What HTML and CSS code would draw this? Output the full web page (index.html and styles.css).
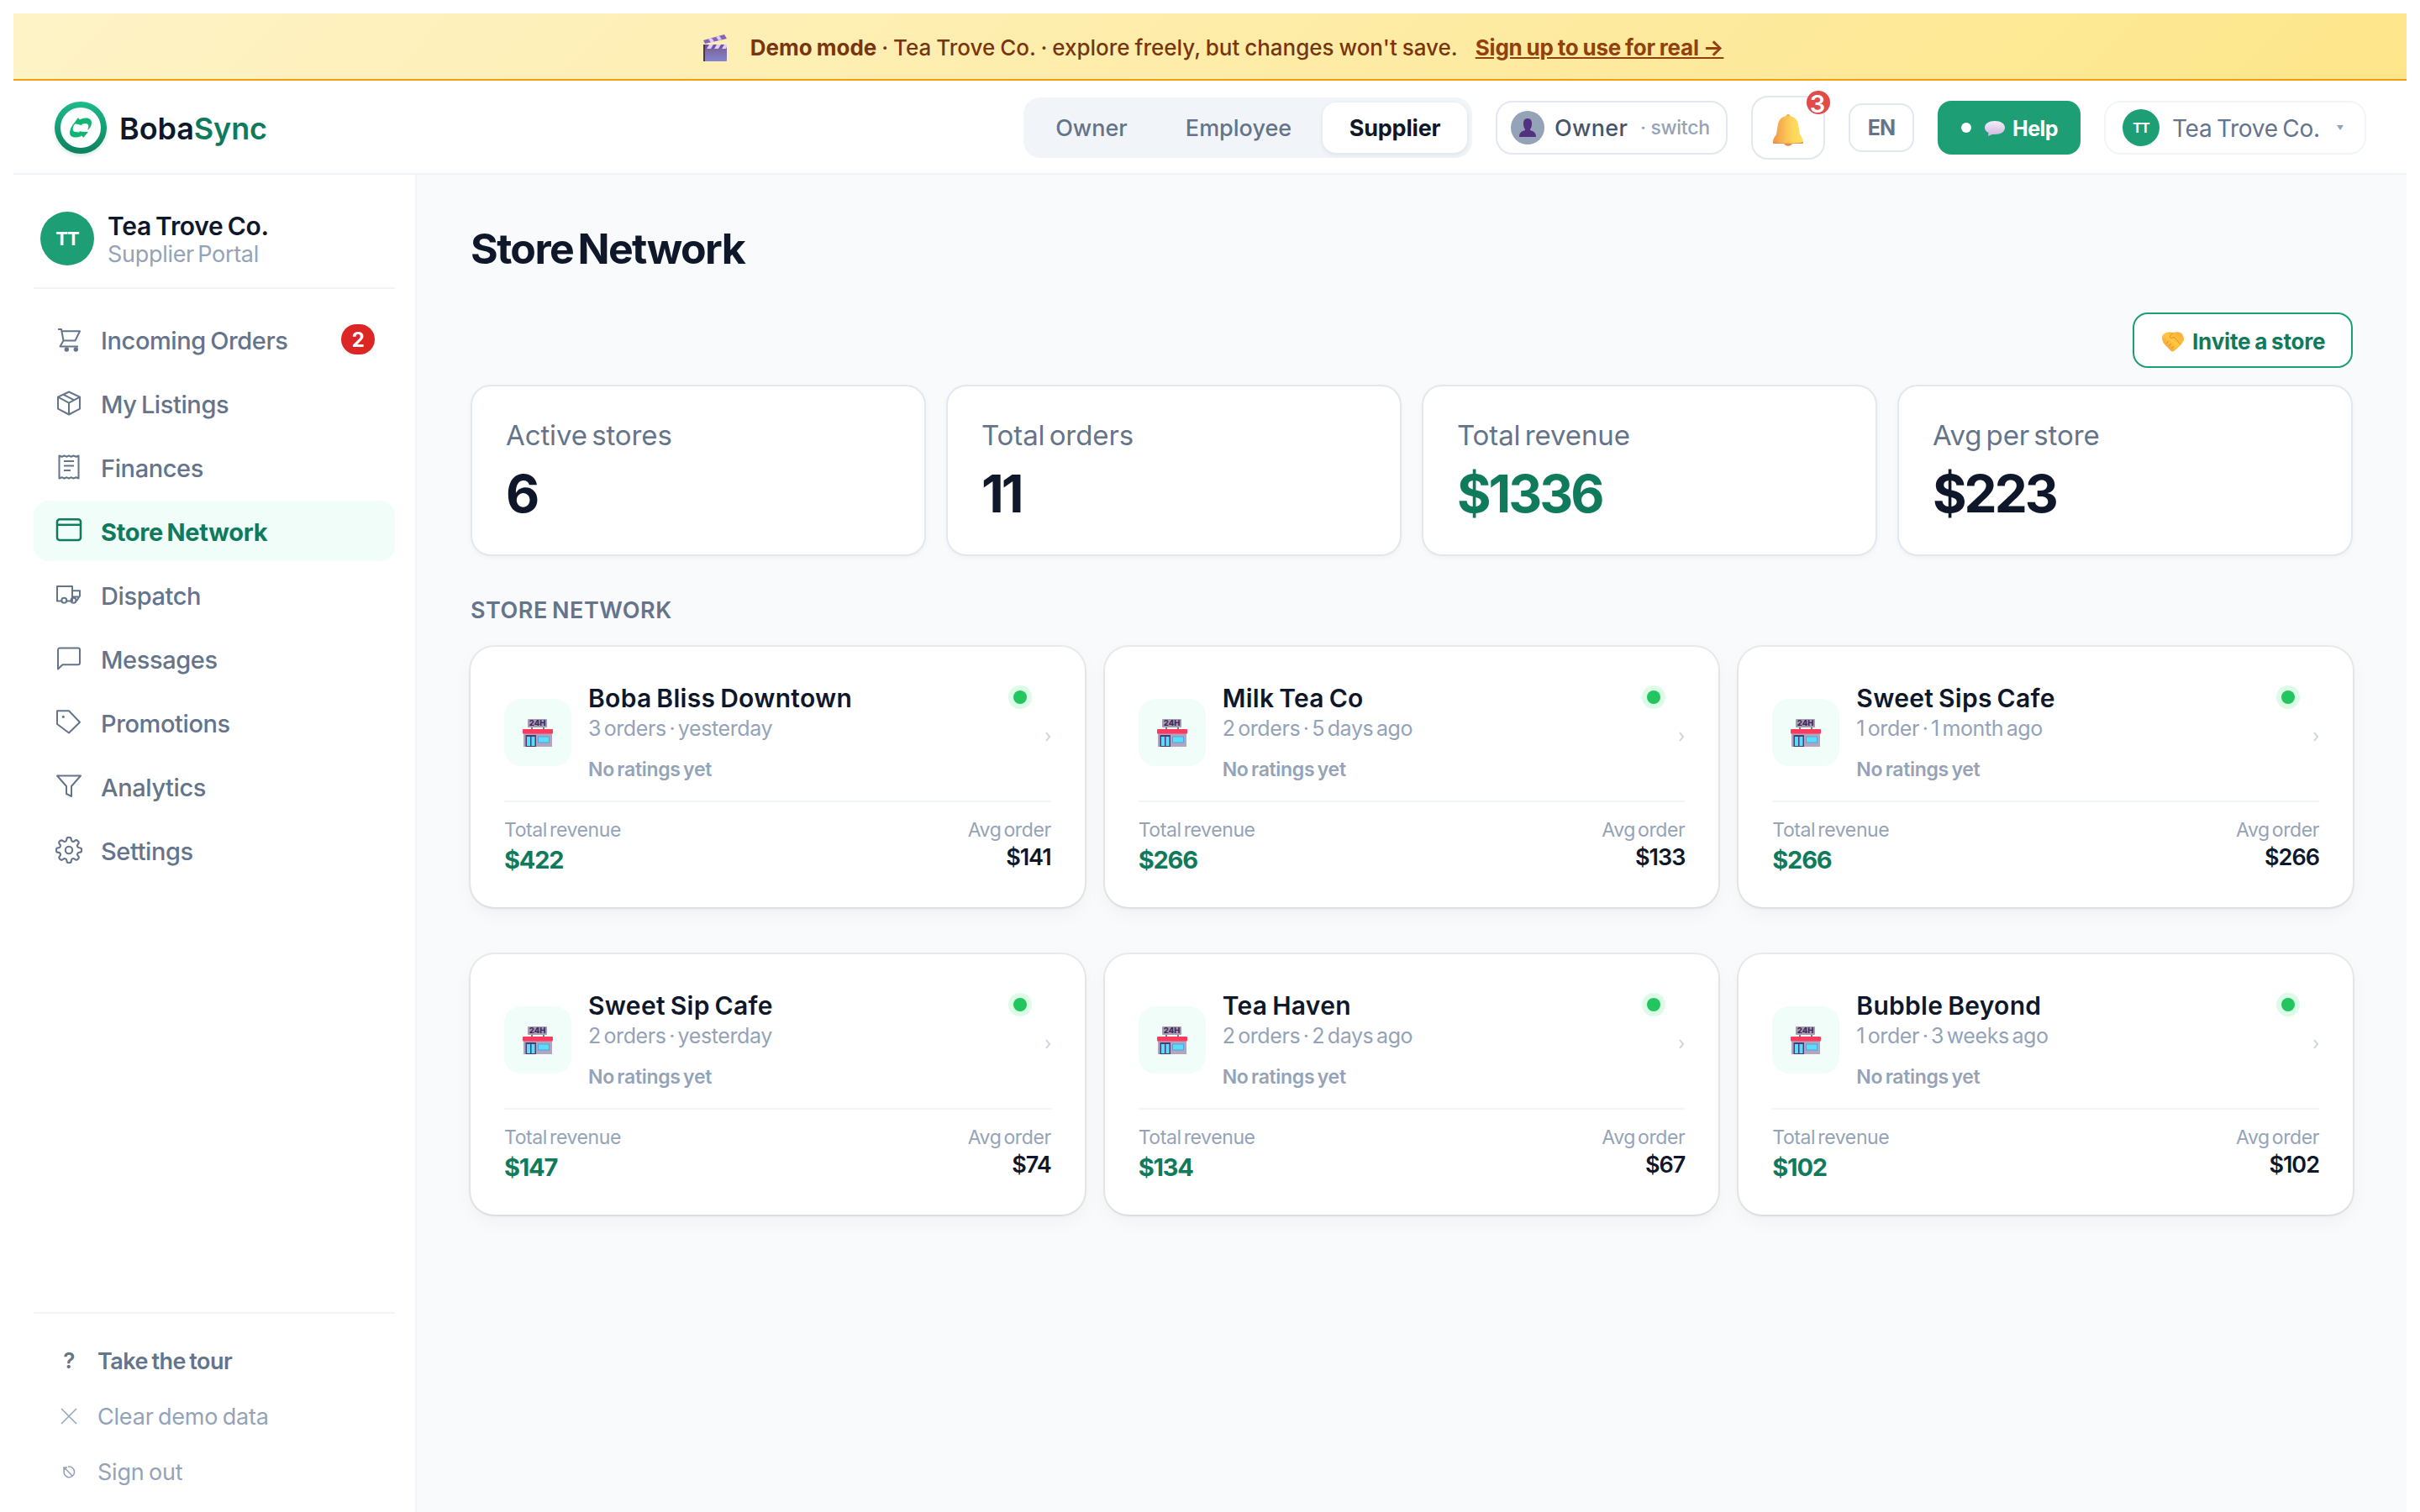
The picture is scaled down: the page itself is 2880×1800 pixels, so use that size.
FILE: index.html
```html
<!DOCTYPE html>
<html lang="en">
<head>
  <meta charset="UTF-8"/>
  <meta name="viewport" content="width=device-width, initial-scale=1.0"/>
  <title>BobaSync - Store Network</title>
  <link rel="stylesheet" href="styles.css">
</head>
<body>
<div class="demo-banner">
  <svg class="clapper" viewBox="0 0 28 32">
    <defs>
      <linearGradient id="clap" x1="0" y1="0" x2="0" y2="1"><stop offset="0" stop-color="#7d5a8c"/><stop offset="1" stop-color="#8285d0"/></linearGradient>
    </defs>
    <path d="M0 7 25 0 28 5 2 11Z" fill="#8a63b8"/>
    <path d="M6 5.300l4-1.100 3 4.300-4 1zM15 2.800l4-1.100 3 4.200-4 1z" fill="#d8d0ff"/>
    <rect y="12" width="28" height="20" rx="1" fill="url(#clap)"/>
    <rect y="12" width="28" height="5" fill="#7a4fa8"/>
    <path d="M7 12h5l-3 5H4zM16 12h5l-3 5h-5zM25 12h3v3l-1 2h-5z" fill="#d8d0ff"/>
    <rect y="12" width="2" height="20" fill="#4a3560"/>
  </svg>
  <span class="demo-text"><b>Demo mode</b> · Tea Trove Co. · explore freely, but changes won't save.</span>
  <a class="demo-link">Sign up to use for real →</a>
</div>

<header class="topbar">
  <div class="brand">
    <svg class="brand-logo" viewBox="0 0 64 64">
      <defs>
        <linearGradient id="ring" x1="0" y1="0" x2="0" y2="1"><stop offset="0" stop-color="#1dbb8b"/><stop offset="1" stop-color="#0f7f5f"/></linearGradient>
      </defs>
      <circle cx="32" cy="32" r="31" fill="url(#ring)"/>
      <circle cx="32" cy="32" r="24" fill="#fff"/>
      <path d="M24 27l5-7 1.500 2.500C37 19 45 20 45 26c0 4-2 7-5 9 2-4 2-8-2-8-2 0-4 .5-5 1.500l1 1c-3-1-7-2-10-2.500z" fill="#0eb573"/>
      <path d="M26 26c-4 3-6 8-5 11 1 3 5 3 8 2.500" fill="none" stroke="#0eb573" stroke-width="1.500"/>
      <path d="M41 37l-6 7-1.500-2.500C27 45 19 44 19 38c0-4 2-7 5-9-2 4-2 8 2 8 2 0 4 1 5 0l-1-1c3 1 8 1 11 1z" fill="#0eb573"/>
    </svg>
    <span class="brand-name">Boba<span>Sync</span></span>
  </div>

  <nav class="role-toggle">
    <a class="role owner">Owner</a>
    <a class="role employee">Employee</a>
    <a class="role supplier active">Supplier</a>
  </nav>

  <button class="switch-btn">
    <span class="user-dot">
      <svg viewBox="0 0 20 24"><path d="M10 1c4 0 5 3 5 6 0 4-1 5-2 7v1c4 1 7 3 7 8H0c0-5 3-7 7-8v-1c-1-2-2-3-2-7 0-3 1-6 5-6z" fill="#533182"/></svg>
    </span>
    <span class="switch-name">Owner</span>
    <span class="switch-hint">· switch</span>
  </button>

  <button class="bell-btn">
    <svg viewBox="0 0 36 38">
      <defs>
        <linearGradient id="bell" x1="0" y1="0" x2="1" y2="0"><stop offset="0" stop-color="#ef9549"/><stop offset=".6" stop-color="#ffd35a"/><stop offset="1" stop-color="#ffe25c"/></linearGradient>
      </defs>
      <path d="M13 34h10c0 5-10 5-10 0z" fill="#f08a55"/>
      <circle cx="18" cy="2.500" r="2.500" fill="#f5b04c"/>
      <path d="M18 2c7 0 11 4 12 10l2 12c3 4 4 6 4 9 0 2-1 2-2 2H2c-2 0-2-1-2-2 0-3 1-5 4-9l2-12C7 6 11 2 18 2z" fill="url(#bell)"/>
      <path d="M0 33c6 2 30 2 36 0 0 2-1 2-2 2H2c-2 0-2-1-2-2z" fill="#e8894f"/>
    </svg>
    <span class="bell-count">3</span>
  </button>

  <button class="lang-btn">EN</button>

  <button class="help-btn">
    <i class="help-dot"></i>
    <svg viewBox="0 0 24 18">
      <defs>
        <linearGradient id="talk" x1="0" y1="0" x2="0" y2="1"><stop offset="0" stop-color="#f4eef8"/><stop offset="1" stop-color="#cdb6e2"/></linearGradient>
      </defs>
      <path d="M12 0c7 0 12 3 12 8s-5 8-12 8H9l-5 2 .5-4C2 13 0 11 0 8c0-5 5-8 12-8z" fill="url(#talk)"/>
    </svg>
    <span>Help</span>
  </button>

  <button class="account-btn">
    <span class="avatar small">TT</span>
    <span class="account-name">Tea Trove Co.</span>
    <i class="caret"></i>
  </button>
</header>

<div class="layout">
  <aside class="sidebar">
    <div class="profile">
      <span class="avatar">TT</span>
      <div class="profile-text">
        <div class="profile-name">Tea Trove Co.</div>
        <div class="profile-role">Supplier Portal</div>
      </div>
    </div>

    <nav class="menu">
      <a class="menu-item">
        <svg viewBox="0 0 32 32"><path d="M3 4h4l2.500 13.500L5.500 24.500h21.500M7.500 6.300H29l-5.500 11.200h-14"/><circle class="fill" cx="13.300" cy="28" r="1.700"/><circle class="fill" cx="24.300" cy="28" r="1.700"/></svg>
        <span>Incoming Orders</span>
        <b class="menu-count">2</b>
      </a>
      <a class="menu-item">
        <svg viewBox="0 0 32 32"><path d="M16 2.500 29 8.700v14L16 29.500 3 22.700v-14zM3 8.700l13 6.900 13-6.900M16 15.600v13.900M9.300 5.700l13 6.700"/></svg>
        <span>My Listings</span>
      </a>
      <a class="menu-item">
        <svg viewBox="0 0 32 32"><path d="M4.500 2.500l3 1.200 3-1.200 3 1.200 2.500-1.200 2.500 1.200 3-1.200 3 1.200 3-1.200v27l-3-1.200-3 1.200-3-1.200-2.500 1.200-2.500-1.200-3 1.200-3-1.200-3 1.200zM10 9h12M10 14.400h12M10 20h8"/></svg>
        <span>Finances</span>
      </a>
      <a class="menu-item active">
        <svg viewBox="0 0 32 32"><rect x="2" y="2.300" width="28" height="24.700" rx="3"/><path d="M2 8.800h28"/></svg>
        <span>Store Network</span>
      </a>
      <a class="menu-item">
        <svg viewBox="0 0 32 32"><path d="M7 23.500H2V6h18v17.500h-6M20 11.200h9v6.300l-4 6M20 23.500h-2M20 18.500h8"/><circle cx="10.300" cy="22.800" r="3"/><circle cx="21.500" cy="22.800" r="3"/></svg>
        <span>Dispatch</span>
      </a>
      <a class="menu-item">
        <svg viewBox="0 0 32 32"><path d="M3 28.500V5.500a2 2 0 0 1 2-2h22a2 2 0 0 1 2 2v15.800a2 2 0 0 1-2 2H8.500z"/></svg>
        <span>Messages</span>
      </a>
      <a class="menu-item">
        <svg viewBox="0 0 32 32"><path d="M2 2.300h14l13 13.400-13 12.800L2 18z"/><circle class="fill" cx="9.300" cy="9.300" r=".6"/></svg>
        <span>Promotions</span>
      </a>
      <a class="menu-item">
        <svg viewBox="0 0 32 32"><path d="M2 3.500h28L19 16v12l-6-3v-9z"/></svg>
        <span>Analytics</span>
      </a>
      <a class="menu-item">
        <svg class="gear" viewBox="0.500 0.500 23 23"><circle cx="12" cy="12" r="3"/><path d="M19.400 15a1.650 1.650 0 0 0 .33 1.820l.06.06a2 2 0 0 1-2.830 2.830l-.06-.06a1.650 1.650 0 0 0-1.820-.33 1.650 1.650 0 0 0-1 1.510V21a2 2 0 0 1-4 0v-.09A1.650 1.650 0 0 0 9 19.400a1.650 1.650 0 0 0-1.820.33l-.06.06a2 2 0 0 1-2.830-2.830l.06-.06a1.650 1.650 0 0 0 .33-1.820 1.650 1.650 0 0 0-1.510-1H3a2 2 0 0 1 0-4h.09A1.650 1.650 0 0 0 4.600 9a1.650 1.650 0 0 0-.33-1.820l-.06-.06a2 2 0 0 1 2.830-2.830l.06.06a1.650 1.650 0 0 0 1.820.33H9a1.650 1.650 0 0 0 1-1.510V3a2 2 0 0 1 4 0v.09a1.650 1.650 0 0 0 1 1.510 1.650 1.650 0 0 0 1.820-.33l.06-.06a2 2 0 0 1 2.830 2.830l-.06.06a1.650 1.650 0 0 0-.33 1.820V9a1.650 1.650 0 0 0 1.510 1H21a2 2 0 0 1 0 4h-.09a1.650 1.650 0 0 0-1.510 1z"/></svg>
        <span>Settings</span>
      </a>
    </nav>

    <div class="side-footer">
      <a class="side-link strong"><span class="side-icon">?</span>Take the tour</a>
      <a class="side-link"><svg class="side-icon" viewBox="0 0 32 20"><path d="M7 1l18 18M25 1 7 19"/></svg>Clear demo data</a>
      <a class="side-link"><svg class="side-icon" viewBox="0 0 32 20"><path d="M11.300 6.500A6.300 6.300 0 1 0 15 4.200M20 15 11 5.500M10 9V5h4"/></svg>Sign out</a>
    </div>
  </aside>

  <main class="content">
    <h1>Store Network</h1>

    <div class="actions">
      <button class="invite-btn">
        <svg viewBox="0 0 26 24">
          <defs>
            <linearGradient id="hand" x1="0" y1="1" x2="1" y2="0"><stop offset="0" stop-color="#ef8d3f"/><stop offset=".5" stop-color="#ffc83d"/><stop offset="1" stop-color="#f9a83a"/></linearGradient>
          </defs>
          <path d="M5 1c3-1 5-1 8 0 3-1 6-1 9 0 3 2 4 5 4 9l-3 5-4 4-5 4c-2 1-4 0-5-2l-5-5c-3-3-4-6-4-9 0-3 2-5 5-6z" fill="url(#hand)"/>
          <path d="M13 1 9 6c1 2 3 2 5 0l8 9M5 14l3-3M8 17l3-3M11 20l3-3" fill="none" stroke="#e8862f"/>
        </svg>
        <span>Invite a store</span>
      </button>
    </div>

    <section class="stats">
      <div class="stat">
        <div class="stat-label">Active stores</div>
        <div class="stat-value">6</div>
      </div>
      <div class="stat">
        <div class="stat-label">Total orders</div>
        <div class="stat-value">11</div>
      </div>
      <div class="stat">
        <div class="stat-label">Total revenue</div>
        <div class="stat-value green">$1336</div>
      </div>
      <div class="stat">
        <div class="stat-label">Avg per store</div>
        <div class="stat-value">$223</div>
      </div>
    </section>

    <h2>STORE NETWORK</h2>
    <section class="store-grid" id="grid"></section>
  </main>
</div>

<script>
  const stores = [
    { name: "Boba Bliss Downtown", info: "3 orders · yesterday", revenue: "$422", avg: "$141" },
    { name: "Milk Tea Co", info: "2 orders · 5 days ago", revenue: "$266", avg: "$133" },
    { name: "Sweet Sips Cafe", info: "1 order · 1 month ago", revenue: "$266", avg: "$266" },
    { name: "Sweet Sip Cafe", info: "2 orders · yesterday", revenue: "$147", avg: "$74" },
    { name: "Tea Haven", info: "2 orders · 2 days ago", revenue: "$134", avg: "$67" },
    { name: "Bubble Beyond", info: "1 order · 3 weeks ago", revenue: "$102", avg: "$102" }
  ];

  const shopIcon = `
    <svg viewBox="0 0 36 33">
      <path d="M11 8v5M25 8v5" stroke="#5b4a6b" stroke-width="1.500"/>
      <rect x="1" y="16" width="34" height="17" fill="#b3a5bd"/>
      <rect x="6" y="0" width="23" height="10" rx="1" fill="#a79bb0"/>
      <text x="17.500" y="8.300" text-anchor="middle">24H</text>
      <rect x="0" y="12" width="36" height="5.500" rx="1" fill="#fb3a5e"/>
      <rect x="3.500" y="19" width="12.500" height="14" fill="#4b3a78"/>
      <path d="M5 21h4v11H5zM10.500 21h4v11h-4z" fill="#5bdcf8"/>
      <rect x="18.500" y="21" width="13" height="7" fill="#5bdcf8" stroke="#4aa5e8"/>
    </svg>`;

  const grid = document.getElementById("grid");

  stores.forEach((store) => {
    const card = document.createElement("div");
    card.className = "store";
    card.innerHTML = `
      <div class="store-top">
        <div class="store-icon">${shopIcon}</div>
        <div class="store-info">
          <div class="store-name"><span>${store.name}</span><i class="status"></i></div>
          <div class="store-orders">${store.info}</div>
          <div class="store-rating">No ratings yet</div>
        </div>
        <svg class="chevron" viewBox="0 0 8 12"><path d="M2 1l4 5-4 5"/></svg>
      </div>
      <div class="store-bottom">
        <div>
          <div class="money-label">Total revenue</div>
          <div class="money-total">${store.revenue}</div>
        </div>
        <div class="right">
          <div class="money-label">Avg order</div>
          <div class="money-avg">${store.avg}</div>
        </div>
      </div>`;
    grid.appendChild(card);
  });
</script>
</body>
</html>
```
FILE: styles.css
```css
* {
  box-sizing: border-box;
}

body {
  margin: 0;
  padding: 16px 16px 0;
  height: 1800px;
  overflow: hidden;
  display: flex;
  flex-direction: column;
  font-family: Inter, 'Open Sans', sans-serif;
  background: #fff;
  color: #0f172a;
}

button {
  font-family: inherit;
  background: #fff;
  padding: 0;
  margin: 0;
}

svg {
  display: block;
  flex: none;
}

/* demo banner */
.demo-banner {
  height: 80px;
  flex: none;
  display: flex;
  align-items: center;
  justify-content: center;
  padding: 3px 0 0 8px;
  background: linear-gradient(135deg, #fef3c7, #fde68a);
  border-bottom: 2px solid #f59e0b;
  color: #78350f;
  font-size: 26px;
  font-weight: 500;
  word-spacing: -1px;
  white-space: nowrap;
}

.clapper {
  width: 28px;
  height: 32px;
  margin-right: 28px;
}

.demo-text b {
  font-weight: 700;
}

.demo-link {
  margin-left: 21px;
  color: #92400e;
  font-weight: 700;
  letter-spacing: -0.2px;
  text-decoration: underline;
}

/* top bar */
.topbar {
  height: 112px;
  flex: none;
  display: flex;
  align-items: center;
  gap: 28px;
  padding: 2px 48px 0;
  border-bottom: 2px solid #f1f5f9;
  white-space: nowrap;
}

.brand {
  display: flex;
  align-items: center;
  gap: 14px;
  margin-right: auto;
}

.brand-logo {
  width: 64px;
  height: 64px;
  filter: drop-shadow(0 2px 2px rgba(15, 127, 95, 0.2));
}

.brand-name {
  padding-top: 2px;
  font-size: 36px;
  font-weight: 600;
  letter-spacing: -0.1px;
}

.brand-name span {
  color: #0f7b5c;
}

.role-toggle {
  width: 534px;
  height: 72px;
  display: flex;
  gap: 4px;
  padding: 6px;
  background: #f1f5f9;
  border-radius: 20px;
}

.role {
  text-align: center;
  line-height: 62px;
  font-size: 27px;
  font-weight: 500;
  color: #64748b;
  border-radius: 16px;
}

.role.owner {
  width: 150px;
}

.role.employee {
  flex: 1;
}

.role.active {
  width: 172px;
  background: #fff;
  color: #0f172a;
  font-weight: 700;
  letter-spacing: -0.2px;
  box-shadow: 0 2px 6px rgba(0, 0, 0, 0.08);
}

.switch-btn {
  width: 276px;
  height: 64px;
  display: flex;
  align-items: center;
  padding-left: 16px;
  border: 2px solid #e2e8f0;
  border-radius: 20px;
}

.user-dot {
  width: 40px;
  height: 40px;
  border-radius: 50%;
  background: #94a3b8;
  display: flex;
  align-items: center;
  justify-content: center;
}

.user-dot svg {
  width: 20px;
  height: 24px;
}

.switch-name {
  margin-left: 12px;
  padding-top: 1px;
  width: 102px;
  text-align: left;
  font-size: 27px;
  font-weight: 500;
  letter-spacing: 0.3px;
  color: #475569;
}

.switch-hint {
  font-size: 23px;
  font-weight: 500;
  letter-spacing: -0.3px;
  color: #94a3b8;
}

.bell-btn {
  position: relative;
  width: 88px;
  height: 76px;
  display: flex;
  align-items: center;
  justify-content: center;
  padding-top: 5px;
  border: 2px solid #e2e8f0;
  border-radius: 20px;
}

.bell-btn svg {
  width: 36px;
  height: 38px;
}

.bell-count {
  position: absolute;
  top: -8px;
  right: -8px;
  width: 28px;
  height: 28px;
  border-radius: 50%;
  background: #e24b4a;
  color: #fff;
  font-size: 29px;
  font-weight: 600;
  line-height: 32px;
  text-indent: -2px;
}

.lang-btn {
  width: 78px;
  height: 58px;
  border: 2px solid #e2e8f0;
  border-radius: 16px;
  font-size: 25px;
  font-weight: 700;
  letter-spacing: -0.8px;
  color: #64748b;
}

.help-btn {
  width: 170px;
  height: 64px;
  display: flex;
  align-items: center;
  padding-left: 28px;
  border: none;
  border-radius: 16px;
  background: #1d9e75;
  color: #fff;
  font-size: 25px;
  font-weight: 700;
  letter-spacing: -0.5px;
}

.help-btn span {
  padding-top: 2px;
}

.help-dot {
  width: 12px;
  height: 12px;
  border-radius: 50%;
  background: #fff;
}

.help-btn svg {
  width: 24px;
  height: 18px;
  margin: 2px 9px 0 16px;
}

.account-btn {
  width: 312px;
  height: 64px;
  display: flex;
  align-items: center;
  padding-left: 20px;
  border: 2px solid #f1f5f9;
  border-radius: 20px;
}

.avatar {
  width: 64px;
  height: 64px;
  flex: none;
  border-radius: 50%;
  background: #1d9e75;
  color: #fff;
  display: flex;
  align-items: center;
  justify-content: center;
  font-size: 22px;
  font-weight: 700;
  letter-spacing: -1px;
}

.avatar.small {
  width: 44px;
  height: 44px;
  font-size: 16px;
}

.account-name {
  width: 196px;
  margin-left: 15px;
  padding-top: 2px;
  text-align: left;
  font-size: 28px;
  letter-spacing: -0.3px;
  word-spacing: -2px;
  color: #64748b;
}

.caret {
  border: 4px solid transparent;
  border-top: 6px solid #94a3b8;
  border-bottom: none;
}

/* sidebar */
.layout {
  flex: 1;
  display: flex;
  min-height: 0;
}

.sidebar {
  width: 480px;
  flex: none;
  display: flex;
  flex-direction: column;
  padding: 44px 24px 15px;
  border-right: 2px solid #f1f5f9;
}

.profile {
  height: 92px;
  display: flex;
  gap: 16px;
  padding: 0 8px;
  border-bottom: 2px solid #f1f5f9;
}

.profile-text {
  padding-top: 1px;
  line-height: 33px;
}

.profile-name {
  font-size: 30px;
  font-weight: 600;
  letter-spacing: -0.3px;
  word-spacing: -2px;
}

.profile-role {
  font-size: 27px;
  letter-spacing: -0.3px;
  word-spacing: -3px;
  color: #94a3b8;
}

.menu {
  display: flex;
  flex-direction: column;
  gap: 4px;
  margin-top: 24px;
}

.menu-item {
  height: 72px;
  display: flex;
  align-items: center;
  padding: 0 24px 0 26px;
  border-radius: 18px;
  color: #64748b;
  font-size: 29px;
  font-weight: 500;
  letter-spacing: -0.4px;
  word-spacing: -2px;
}

.menu-item span {
  padding-top: 2px;
}

.menu-item svg {
  width: 32px;
  height: 32px;
  margin-right: 22px;
  fill: none;
  stroke: currentColor;
  stroke-width: 2;
  stroke-linejoin: round;
}

.menu-item svg.gear {
  stroke-width: 1.500;
}

.menu-item svg .fill {
  fill: currentColor;
}

.menu-item.active {
  background: #f0fdf9;
  color: #0f7b5c;
  font-weight: 700;
  letter-spacing: -0.3px;
}

.menu-item.active svg {
  stroke-width: 2.500;
}

.menu-count {
  width: 40px;
  height: 36px;
  margin-left: auto;
  border-radius: 18px;
  background: #dc2626;
  color: #fff;
  font-size: 24px;
  line-height: 38px;
  text-align: center;
}

.side-footer {
  margin-top: auto;
  padding-top: 23px;
  border-top: 2px solid #f1f5f9;
}

.side-link {
  height: 66px;
  display: flex;
  align-items: center;
  padding-left: 26px;
  font-size: 27px;
  letter-spacing: -0.2px;
  word-spacing: -2px;
  color: #94a3b8;
}

.side-link.strong {
  color: #64748b;
  font-weight: 600;
  letter-spacing: -0.5px;
}

.side-icon {
  width: 32px;
  height: 20px;
  margin-right: 18px;
  text-align: center;
  line-height: 20px;
  font-size: 26px;
  fill: none;
  stroke: currentColor;
  stroke-width: 1.500;
}

span.side-icon {
  stroke: none;
}

/* page content */
.content {
  flex: 1;
  padding: 58px 64px 0;
  background: #f8fafc;
}

h1 {
  margin: 0;
  padding-top: 1px;
  font-size: 50px;
  line-height: 59px;
  font-weight: 700;
  letter-spacing: -1.600px;
  word-spacing: -5px;
}

.actions {
  display: flex;
  justify-content: flex-end;
  margin: 46px 0 20px;
}

.invite-btn {
  width: 262px;
  height: 66px;
  display: flex;
  align-items: center;
  padding-left: 33px;
  border: 2px solid #1d9e75;
  border-radius: 18px;
  color: #0f7b5c;
  font-size: 26px;
  font-weight: 700;
  letter-spacing: -0.2px;
  word-spacing: -1px;
}

.invite-btn svg {
  width: 26px;
  height: 24px;
  margin: 4px 10px 0 0;
}

.invite-btn span {
  padding-top: 2px;
}

.stats {
  display: grid;
  grid-template-columns: repeat(4, 1fr);
  gap: 24px;
}

.stat {
  height: 204px;
  padding: 38px 40px;
  background: #fff;
  border: 2px solid #e2e8f0;
  border-radius: 24px;
  box-shadow: 0 2px 6px rgba(15, 23, 42, 0.04);
}

.stat-label {
  font-size: 33px;
  line-height: 40px;
  letter-spacing: -0.1px;
  word-spacing: -4px;
  color: #64748b;
}

.stat-value {
  margin-top: 11px;
  font-size: 62px;
  line-height: 77px;
  font-weight: 700;
  letter-spacing: -3px;
}

.green {
  color: #0f7b5c;
}

h2 {
  margin: 48px 0 26px;
  font-size: 27px;
  line-height: 34px;
  font-weight: 600;
  letter-spacing: 0.500px;
  word-spacing: -2px;
  color: #64748b;
}

.store-grid {
  display: grid;
  grid-template-columns: repeat(3, 1fr);
  gap: 56px 24px;
}

.store {
  height: 310px;
  padding: 43px 40px 0;
  background: #fff;
  border-radius: 28px;
  box-shadow: 0 0 0 2px rgba(0, 0, 0, 0.06), 0 2px 4px rgba(0, 0, 0, 0.04), 0 8px 24px rgba(15, 23, 42, 0.04);
}

.store-top {
  display: flex;
  align-items: center;
  gap: 20px;
  padding-bottom: 22px;
  border-bottom: 2px solid #f1f5f9;
}

.store-icon {
  width: 80px;
  height: 80px;
  border-radius: 20px;
  background: #f0fdf9;
  display: flex;
  align-items: center;
  justify-content: center;
}

.store-icon svg {
  width: 36px;
  height: 33px;
}

.store-icon text {
  font-size: 9.500px;
  font-weight: 800;
  fill: #3d2a5c;
}

.store-info {
  flex: 1;
}

.store-name {
  display: flex;
  justify-content: space-between;
  align-items: center;
  line-height: 36px;
  font-size: 30px;
  font-weight: 600;
  letter-spacing: 0.300px;
  word-spacing: -2px;
}

.status {
  width: 16px;
  height: 16px;
  margin: -2px 1px 0 0;
  border-radius: 50%;
  background: #22c55e;
  box-shadow: 0 0 0 6px #dcfce7;
}

.store-orders {
  margin-top: 2px;
  font-size: 25px;
  line-height: 32px;
  letter-spacing: -0.400px;
  word-spacing: -3px;
  color: #94a3b8;
}

.store-rating {
  margin-top: 19px;
  font-size: 23px;
  line-height: 29px;
  font-weight: 600;
  letter-spacing: -0.300px;
  word-spacing: -2px;
  color: #94a3b8;
}

.chevron {
  width: 8px;
  height: 12px;
  margin-top: 10px;
  fill: none;
  stroke: #cbd5e1;
  stroke-width: 2;
}

.store-bottom {
  display: flex;
  justify-content: space-between;
  padding-top: 19px;
}

.right {
  text-align: right;
}

.money-label {
  margin-bottom: 2px;
  font-size: 23px;
  line-height: 28px;
  letter-spacing: -0.400px;
  word-spacing: -3px;
  color: #94a3b8;
}

.money-total {
  font-size: 29px;
  line-height: 40px;
  font-weight: 700;
  letter-spacing: -1.200px;
  color: #0f7b5c;
}

.money-avg {
  font-size: 27px;
  line-height: 34px;
  font-weight: 600;
  letter-spacing: -1px;
}
```
